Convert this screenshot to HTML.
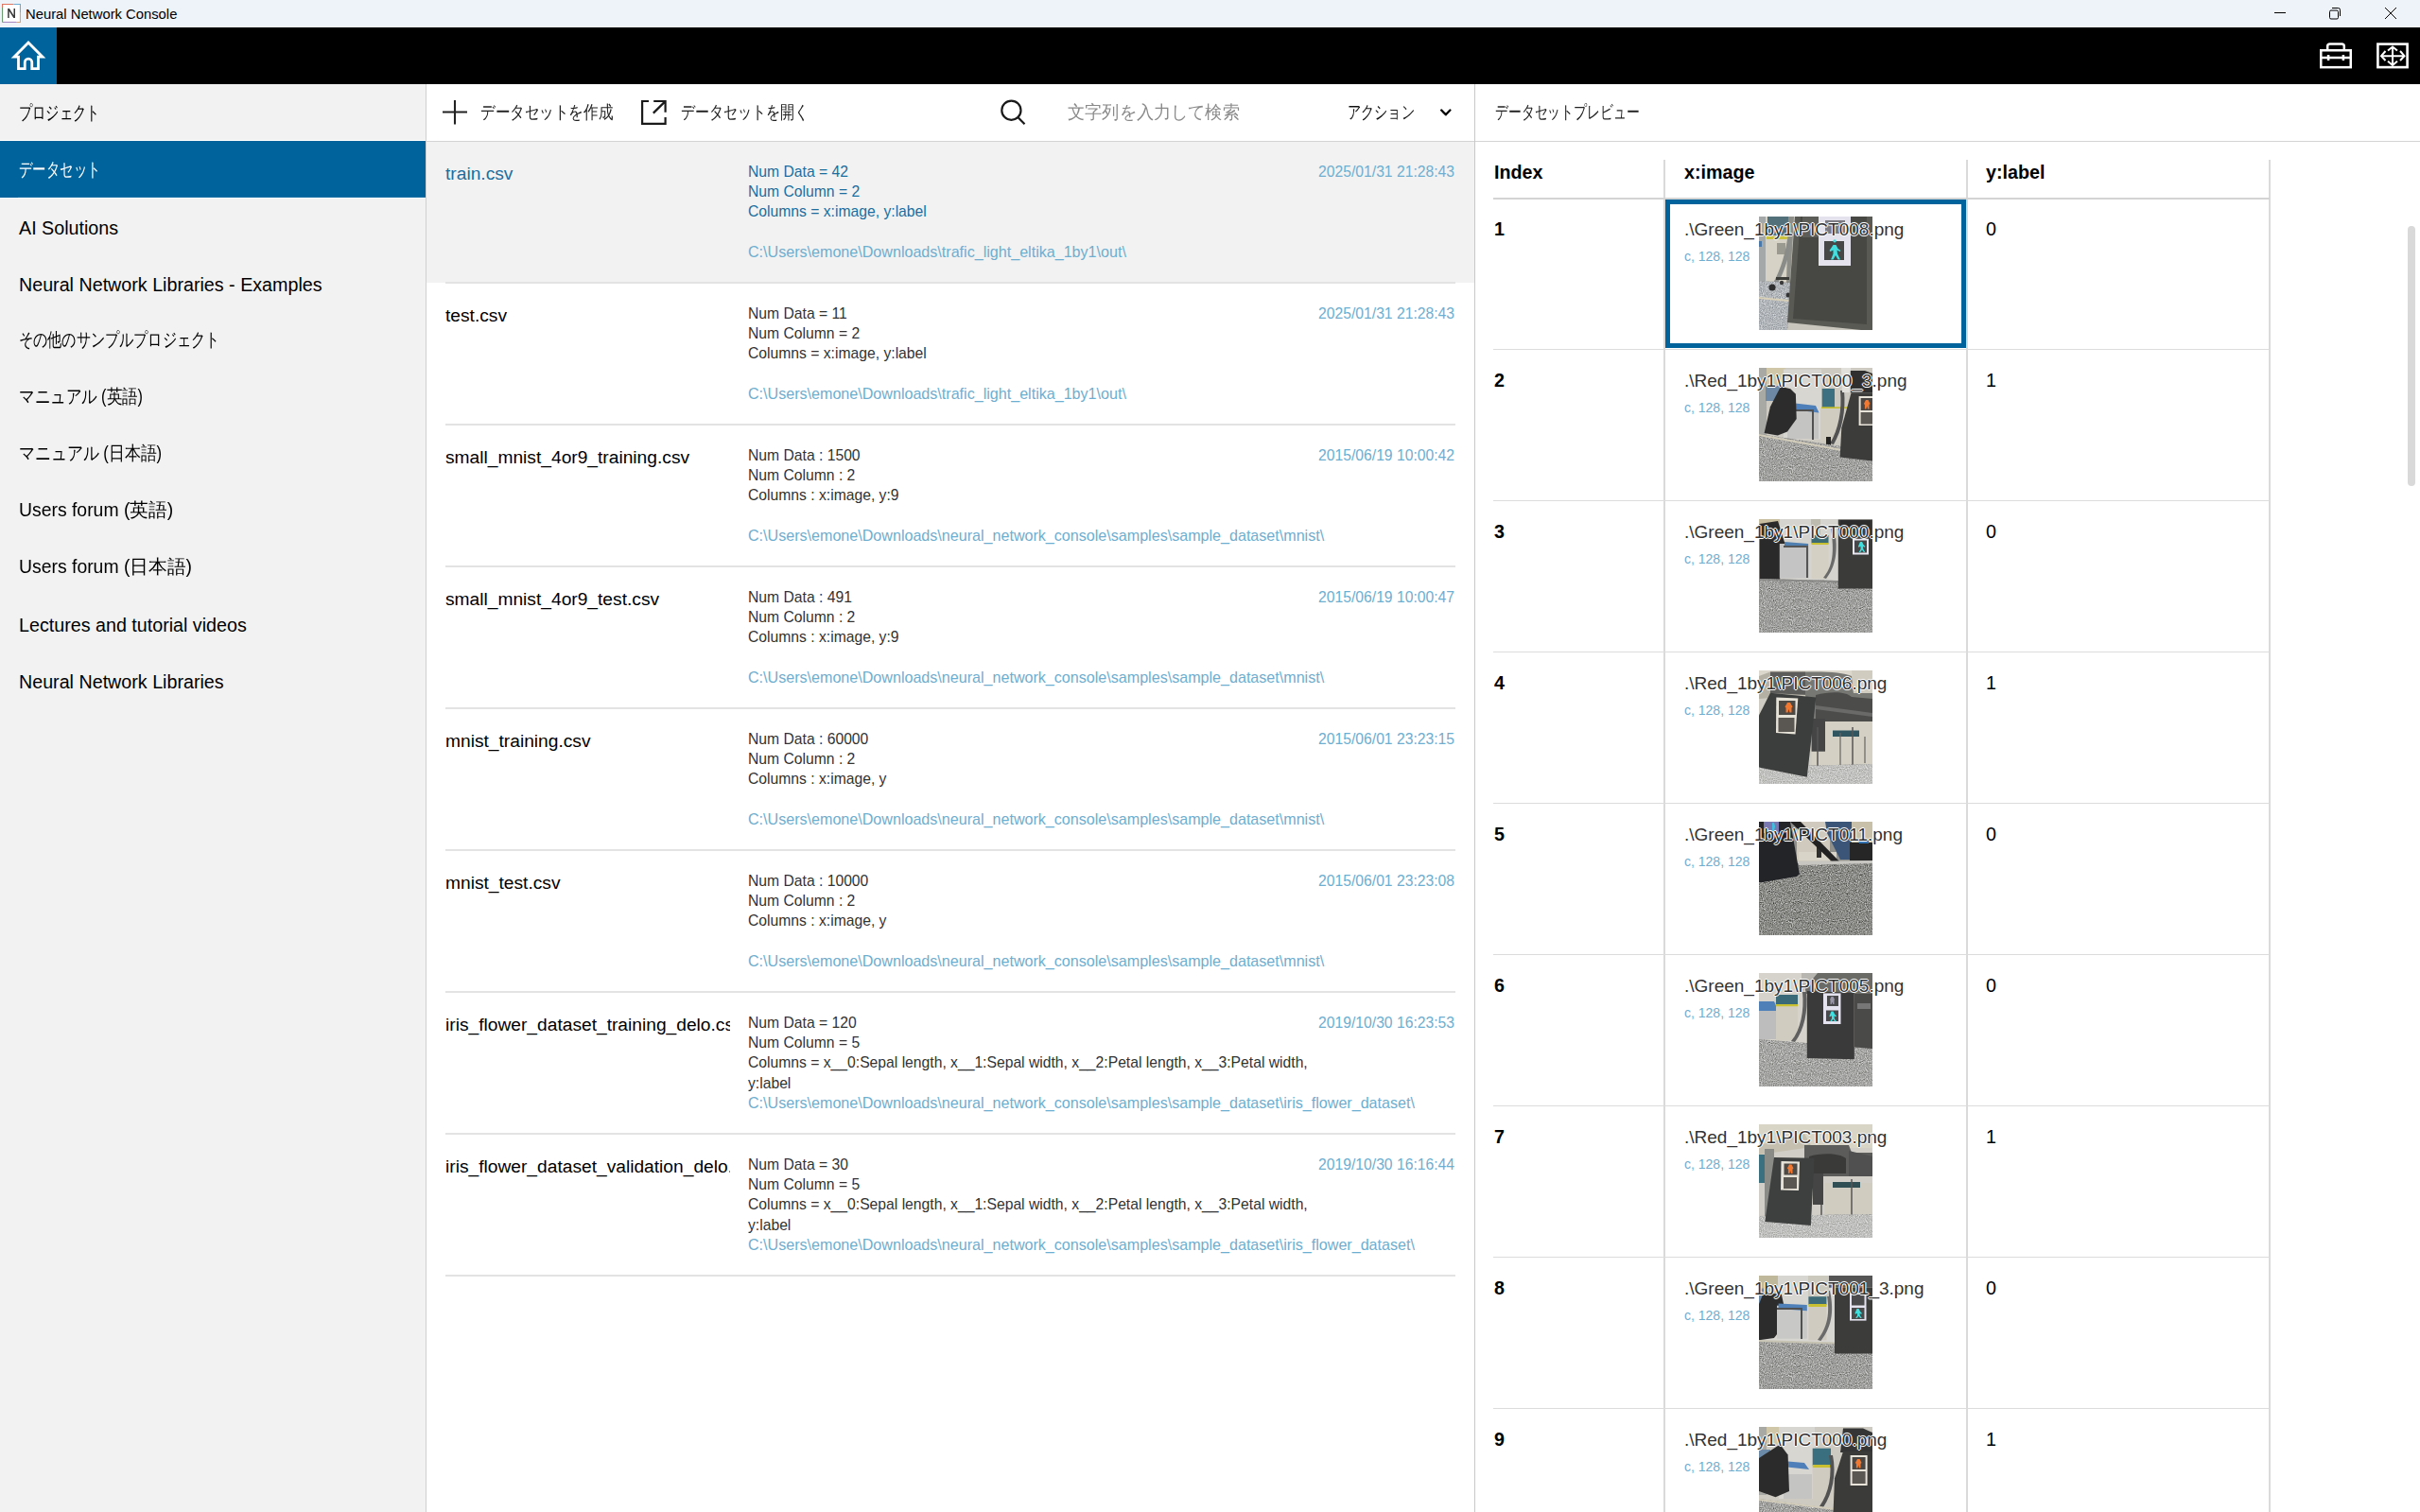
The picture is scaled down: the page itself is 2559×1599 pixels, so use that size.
<!DOCTYPE html><html><head><meta charset="utf-8"><style>
*{margin:0;padding:0;box-sizing:border-box}
html,body{width:2559px;height:1599px;overflow:hidden;background:#fff;font-family:"Liberation Sans",sans-serif;color:#000}
div,span,svg{position:absolute;white-space:nowrap}
.si{left:0;width:450px;height:60px}
.st{left:20px;top:17.5px;font-size:19.7px;line-height:24px;color:#000;transform-origin:0 50%}
.sel{background:#00639b}
.sel .st{color:#fff}
.vl{width:1px;background:#d0d0d0}
.hl{height:1px;background:#dcdcdc}
.fn{left:471px;width:301px;overflow:hidden;font-size:19.2px;line-height:24px;color:#000}
.inf{left:791px;font-size:15.7px;line-height:21.2px;color:#333}
.p{color:#6eaed0;font-size:16.1px;position:static}
.dt{right:1021px;font-size:15.7px;line-height:21.2px;color:#6eaed0}
.th{font-size:19.7px;font-weight:bold;line-height:24px}
.idx{left:1580px;font-size:19.7px;font-weight:bold;line-height:24px}
.fnm{left:1781px;font-size:19px;line-height:24px;color:#333;text-shadow:1px 0 0 #fff,-1px 0 0 #fff,0 1px 0 #fff,0 -1px 0 #fff,0 0 2px #fff}
.sz{left:1781px;font-size:14px;line-height:18px;color:#6eaed0}
.lb{left:2100px;font-size:19.7px;line-height:24px}
.img{left:1860px;width:120px;height:120px;overflow:hidden}
.jt{font-size:19px;line-height:28px;transform-origin:0 50%}
</style></head><body>
<svg width="0" height="0" style="left:0;top:0"><defs><filter id="fl" x="0" y="0" width="1" height="1" color-interpolation-filters="sRGB"><feTurbulence type="fractalNoise" baseFrequency="0.9" numOctaves="2" seed="4" result="t"/><feColorMatrix in="t" type="matrix" values="0.33 0.33 0.33 0 0 0.33 0.33 0.33 0 0 0.33 0.33 0.33 0 0 0 0 0 0 1" result="g"/><feComponentTransfer in="g" result="c"><feFuncR type="linear" slope="1.5" intercept="-0.25"/><feFuncG type="linear" slope="1.5" intercept="-0.25"/><feFuncB type="linear" slope="1.5" intercept="-0.25"/></feComponentTransfer><feBlend in="c" in2="SourceGraphic" mode="overlay" result="b"/><feComposite in="b" in2="SourceGraphic" operator="in"/></filter></defs></svg>
<div style="left:0;top:0;width:2559px;height:29px;background:#eef2f9"></div>
<svg style="left:2px;top:4px" width="20" height="20" viewBox="0 0 20 20">
<rect x="0" y="0" width="20" height="20" fill="#fff"/>
<path d="M0.5 4 V0.5 H12.5" stroke="#e2735c" stroke-width="1.2" fill="none"/>
<path d="M12.5 0.5 H19.5 V9" stroke="#6aaed6" stroke-width="1.2" fill="none"/>
<path d="M19.5 9 V19.5 H15" stroke="#d4a67e" stroke-width="1.2" fill="none"/>
<path d="M15 19.5 H0.5" stroke="#a88cc4" stroke-width="1.2" fill="none"/>
<path d="M0.5 19.5 V4" stroke="#6e9a70" stroke-width="1.2" fill="none"/>
<path d="M6.2 15 V5 H7.9 L12.5 12.2 V5 H14 V15 H12.3 L7.7 7.8 V15 Z" fill="#3a3a3a"/>
</svg>
<div style="left:27px;top:5px;font-size:14.8px;line-height:20px;color:#000">Neural Network Console</div>
<svg style="left:2400px;top:0" width="159" height="29" viewBox="2400 0 159 29">
<path d="M2405 13.5 H2417" stroke="#000" stroke-width="1"/>
<rect x="2463.5" y="11" width="9" height="9" rx="1.5" stroke="#000" stroke-width="1" fill="none"/>
<path d="M2466 8.5 H2472.5 A2 2 0 0 1 2474.5 10.5 V17" stroke="#000" stroke-width="1" fill="none"/>
<path d="M2522 8 L2534 20 M2534 8 L2522 20" stroke="#000" stroke-width="1"/>
</svg>
<div style="left:0;top:29px;width:2559px;height:60px;background:#000"></div>
<div style="left:0;top:29px;width:60px;height:60px;background:#00639b"></div>
<svg style="left:0;top:29px" width="60" height="60" viewBox="0 29 60 60">
<path d="M30 45 L15 60.2 H19.5 V72.6 H26.25 V65.8 A3.75 3.75 0 0 1 33.75 65.8 V72.6 H40.5 V60.2 H45 Z" stroke="#fff" stroke-width="2.8" fill="none" stroke-linejoin="miter" stroke-miterlimit="4"/>
</svg>
<svg style="left:2440px;top:36px" width="119" height="46" viewBox="2440 36 119 46">
<rect x="2454.25" y="53.25" width="31.5" height="17.9" stroke="#fff" stroke-width="2.5" fill="none"/>
<path d="M2461.2 53 V49 A2.5 2.5 0 0 1 2463.7 46.5 H2476.3 A2.5 2.5 0 0 1 2478.8 49 V53" stroke="#fff" stroke-width="2.5" fill="none"/>
<path d="M2455 61 H2485" stroke="#fff" stroke-width="2.5"/>
<path d="M2462.1 58 V64 M2477.9 58 V64" stroke="#fff" stroke-width="2.5"/>
<rect x="2514.4" y="46.6" width="31.2" height="24.5" stroke="#fff" stroke-width="2.6" fill="none"/>
<path d="M2518 59.2 H2542.5 M2530 49.5 V69" stroke="#fff" stroke-width="2"/>
<path d="M2522.5 54 L2518 59.2 L2522.5 64 M2538 54 L2542.5 59.2 L2538 64 M2525 53.5 L2530 49.5 L2535 53.5 M2525 64.8 L2530 69 L2535 64.8" stroke="#fff" stroke-width="2" fill="none"/>
</svg>
<div style="left:0;top:89px;width:450px;height:1510px;background:#f2f2f2"></div>
<div class="si" style="top:89px"><span class="st" id="s0">プロジェクト</span></div>
<div class="si sel" style="top:149px"><span class="st" id="s1">データセット</span></div>
<div class="si" style="top:209px"><span class="st" style="top:20px">AI Solutions</span></div>
<div class="si" style="top:269px"><span class="st" style="top:20px">Neural Network Libraries - Examples</span></div>
<div class="si" style="top:329px"><span class="st" id="s4">その他のサンプルプロジェクト</span></div>
<div class="si" style="top:389px"><span class="st" id="s5">マニュアル (英語)</span></div>
<div class="si" style="top:449px"><span class="st" id="s6">マニュアル (日本語)</span></div>
<div class="si" style="top:509px"><span class="st" id="s7">Users forum (英語)</span></div>
<div class="si" style="top:569px"><span class="st" id="s8">Users forum (日本語)</span></div>
<div class="si" style="top:629px"><span class="st" style="top:20px">Lectures and tutorial videos</span></div>
<div class="si" style="top:689px"><span class="st" style="top:20px">Neural Network Libraries</span></div>
<div style="left:0;top:148px;width:450px;height:1px;background:#fff"></div>
<div style="left:19px;top:208px;width:431px;height:1px;background:#1a73a6"></div>
<div style="left:0;top:209px;width:450px;height:1px;background:#fcfcfc"></div>
<div class="vl" style="left:450px;top:89px;height:1510px"></div>
<div class="vl" style="left:1559px;top:89px;height:1510px;background:#c8c8c8"></div>
<div class="hl" style="left:451px;top:149px;width:1108px;background:#d4d4d4"></div>
<div class="hl" style="left:1560px;top:149px;width:999px;background:#d4d4d4"></div>
<svg style="left:455px;top:95px" width="260" height="50" viewBox="455 95 260 50">
<path d="M468 118.5 H494 M481 106 V131.5" stroke="#222" stroke-width="2.1"/>
<path d="M686 107 H679.1 V130.9 H703.6 V124.1 M703.6 118.7 V107 H691.2 M703 107.6 L690.8 119.6" stroke="#1a1a1a" stroke-width="2.2" fill="none"/>
</svg>
<svg style="left:1050px;top:95px" width="50" height="45" viewBox="1050 95 50 45">
<circle cx="1069.4" cy="116.7" r="10.1" stroke="#1a1a1a" stroke-width="2.2" fill="none"/>
<path d="M1076.6 124.2 L1083.5 131.3" stroke="#1a1a1a" stroke-width="2.2"/>
</svg>
<svg style="left:1515px;top:108px" width="25" height="20" viewBox="1515 108 25 20">
<path d="M1524.2 116.5 L1528.8 121.3 L1533.4 116.5" stroke="#000" stroke-width="2.3" fill="none" stroke-linecap="round" stroke-linejoin="round"/>
</svg>
<span class="jt" id="tb0" style="left:508.2px;top:105px;color:#222">データセットを作成</span>
<span class="jt" id="tb1" style="left:720.0px;top:105px;color:#222">データセットを開く</span>
<span class="jt" id="tb2" style="left:1128.8px;top:105px;color:#8a8a8a">文字列を入力して検索</span>
<span class="jt" id="tb3" style="left:1424.8px;top:105px;color:#111">アクション</span>
<span class="jt" id="tb4" style="left:1580.5px;top:105px;color:#222">データセットプレビュー</span>
<div style="left:451px;top:150px;width:1108px;height:149px;background:#f2f2f2"></div>
<div class="hl" style="left:471px;top:298px;width:1068px;height:2px;background:#e3e3e3"></div>
<div class="fn" style="top:172px;color:#1a6ea0">train.csv</div>
<div class="inf" style="top:171px;color:#1a6ea0">Num Data = 42<br>Num Column = 2<br>Columns = x:image, y:label<br>&nbsp;<br><span class="p">C:\Users\emone\Downloads\trafic_light_eltika_1by1\out\</span></div>
<div class="dt" style="top:171px">2025/01/31 21:28:43</div>
<div class="hl" style="left:471px;top:448px;width:1068px;height:2px;background:#e3e3e3"></div>
<div class="fn" style="top:322px;color:#000">test.csv</div>
<div class="inf" style="top:321px;color:#333">Num Data = 11<br>Num Column = 2<br>Columns = x:image, y:label<br>&nbsp;<br><span class="p">C:\Users\emone\Downloads\trafic_light_eltika_1by1\out\</span></div>
<div class="dt" style="top:321px">2025/01/31 21:28:43</div>
<div class="hl" style="left:471px;top:598px;width:1068px;height:2px;background:#e3e3e3"></div>
<div class="fn" style="top:472px;color:#000">small_mnist_4or9_training.csv</div>
<div class="inf" style="top:471px;color:#333">Num Data : 1500<br>Num Column : 2<br>Columns : x:image, y:9<br>&nbsp;<br><span class="p">C:\Users\emone\Downloads\neural_network_console\samples\sample_dataset\mnist\</span></div>
<div class="dt" style="top:471px">2015/06/19 10:00:42</div>
<div class="hl" style="left:471px;top:748px;width:1068px;height:2px;background:#e3e3e3"></div>
<div class="fn" style="top:622px;color:#000">small_mnist_4or9_test.csv</div>
<div class="inf" style="top:621px;color:#333">Num Data : 491<br>Num Column : 2<br>Columns : x:image, y:9<br>&nbsp;<br><span class="p">C:\Users\emone\Downloads\neural_network_console\samples\sample_dataset\mnist\</span></div>
<div class="dt" style="top:621px">2015/06/19 10:00:47</div>
<div class="hl" style="left:471px;top:898px;width:1068px;height:2px;background:#e3e3e3"></div>
<div class="fn" style="top:772px;color:#000">mnist_training.csv</div>
<div class="inf" style="top:771px;color:#333">Num Data : 60000<br>Num Column : 2<br>Columns : x:image, y<br>&nbsp;<br><span class="p">C:\Users\emone\Downloads\neural_network_console\samples\sample_dataset\mnist\</span></div>
<div class="dt" style="top:771px">2015/06/01 23:23:15</div>
<div class="hl" style="left:471px;top:1048px;width:1068px;height:2px;background:#e3e3e3"></div>
<div class="fn" style="top:922px;color:#000">mnist_test.csv</div>
<div class="inf" style="top:921px;color:#333">Num Data : 10000<br>Num Column : 2<br>Columns : x:image, y<br>&nbsp;<br><span class="p">C:\Users\emone\Downloads\neural_network_console\samples\sample_dataset\mnist\</span></div>
<div class="dt" style="top:921px">2015/06/01 23:23:08</div>
<div class="hl" style="left:471px;top:1198px;width:1068px;height:2px;background:#e3e3e3"></div>
<div class="fn" style="top:1072px;color:#000">iris_flower_dataset_training_delo.csv</div>
<div class="inf" style="top:1071px;color:#333">Num Data = 120<br>Num Column = 5<br>Columns = x__0:Sepal length, x__1:Sepal width, x__2:Petal length, x__3:Petal width,<br>y:label<br><span class="p">C:\Users\emone\Downloads\neural_network_console\samples\sample_dataset\iris_flower_dataset\</span></div>
<div class="dt" style="top:1071px">2019/10/30 16:23:53</div>
<div class="hl" style="left:471px;top:1348px;width:1068px;height:2px;background:#e3e3e3"></div>
<div class="fn" style="top:1222px;color:#000">iris_flower_dataset_validation_delo.csv</div>
<div class="inf" style="top:1221px;color:#333">Num Data = 30<br>Num Column = 5<br>Columns = x__0:Sepal length, x__1:Sepal width, x__2:Petal length, x__3:Petal width,<br>y:label<br><span class="p">C:\Users\emone\Downloads\neural_network_console\samples\sample_dataset\iris_flower_dataset\</span></div>
<div class="dt" style="top:1221px">2019/10/30 16:16:44</div>
<div class="th" style="left:1580px;top:170px">Index</div>
<div class="th" style="left:1781px;top:170px">x:image</div>
<div class="th" style="left:2100px;top:170px">y:label</div>
<div class="vl" style="left:1759px;top:169px;width:2px;height:1430px;background:#dadada"></div>
<div class="vl" style="left:2079px;top:169px;width:2px;height:1430px;background:#dadada"></div>
<div class="vl" style="left:2399px;top:169px;width:2px;height:1430px;background:#dadada"></div>
<div class="hl" style="left:1579px;top:209px;width:821px;height:2px;background:#d4d4d4"></div>
<div class="hl" style="left:1579px;top:369px;width:821px"></div>
<div class="idx" style="top:230px">1</div>
<svg class="img" style="top:229px" width="120" height="120" viewBox="0 0 120 120"><rect width="120" height="120" fill="#c8c6bd"/>
<rect x="0" y="0" width="8" height="72" fill="#a4a8a8"/>
<rect x="0" y="26" width="3" height="6" fill="#4a78a8"/>
<rect x="7" y="0" width="28" height="70" fill="#d6d3c6"/>
<rect x="9" y="0" width="22" height="20" fill="#52707a"/>
<rect x="8" y="21" width="23" height="3" fill="#c9c23a"/>
<rect x="19" y="28" width="9" height="12" fill="#9a9a90"/>
<path d="M31 0 H37 L33 70 H29Z" fill="#8e8e88"/>
<path d="M30 24 C27 45 20 62 14 72 L18 74 C25 62 32 46 34 24Z" fill="#8a8c8a"/>
<path d="M0 68 L34 70 L30 120 L0 120Z" fill="#b2b6ba" filter="url(#fl)"/>
<path d="M0 85 L32 88 L32 90 L0 87Z" fill="#d8d0b8"/>
<path d="M18 64 H32 V67 H18Z" fill="#3a3a36"/>
<circle cx="14" cy="75" r="3.6" fill="#2f2f2f"/>
<circle cx="24" cy="70" r="2.2" fill="#3a3a3a"/>
<circle cx="31" cy="83" r="2.5" fill="#333"/>
<path d="M38 0 H120 V120 L108 120 L30 112Z" fill="#5a5a55"/>
<path d="M44 0 H114 V114 L36 108Z" fill="#474744"/>
<rect x="46" y="0" width="20" height="22" fill="#5c5c58"/>
<rect x="63" y="0" width="34" height="52" fill="#e4e2ec"/>
<rect x="70" y="4" width="21" height="14" fill="#7a7880"/>
<rect x="69" y="26" width="21" height="20" fill="#474747"/>
<path d="M80 27.5 a1.6 1.6 0 1 1 0.1 0 M78.5 30 l3 0 l2 4 l3 2 l-1 1 l-3 -1.5 l0.5 4 l3 6 h-2.5 l-2.5 -4.5 l-2.5 4.5 h-2.5 l2.5 -6 l0 -4 l-3 1.5 l-1 -1 z" fill="#40e0e0"/></svg>
<div class="fnm" style="top:231px">.\Green_1by1\PICT008.png</div>
<div class="sz" style="top:262px">c, 128, 128</div>
<div class="lb" style="top:230px">0</div>
<div class="hl" style="left:1579px;top:529px;width:821px"></div>
<div class="idx" style="top:390px">2</div>
<svg class="img" style="top:389px" width="120" height="120" viewBox="0 0 120 120"><rect width="120" height="120" fill="#cdcac2"/>
<rect x="0" y="0" width="8" height="72" fill="#a8a8a4"/>
<rect x="8" y="0" width="20" height="19" fill="#cfc7a8"/>
<rect x="7" y="19" width="15" height="16" fill="#6c88a4"/>
<rect x="26" y="1.6" width="40" height="74" fill="#d8d6d0"/>
<rect x="30" y="45" width="33" height="30" fill="#c4c4c2"/>
<path d="M34 37 L60 40 L63.5 47.6 L34 44Z" fill="#4f7fb8"/>
<path d="M33 44 L58 44 L58 76 L56 76 L56 46 L33 46Z" fill="#505050"/>
<path d="M23 19.8 L33.3 22.2 L38.9 27.8 L39.7 54 L30 67.5 L19.8 71.4 L5.6 69 L11.9 41.3Z" fill="#2c2c2c"/>
<rect x="66.7" y="22" width="13.3" height="20" fill="#3d7080"/>
<rect x="66" y="41.3" width="29" height="1.7" fill="#c8c030"/>
<rect x="65" y="43" width="19" height="35" fill="#d0ccc0"/>
<path d="M86 24 C88 45 84 65 75 80 L79 81 C88 66 92 45 90 24Z" fill="#525252"/>
<rect x="71" y="73" width="5" height="10" fill="#222"/>
<path d="M0 70 L120 88 L120 120 L0 120Z" fill="#a2a2a0" filter="url(#fl)"/>
<path d="M0 70 L86 85.7 L86 87.7 L0 72Z" fill="#d2ccba"/>
<path d="M87 0 H97 L96.8 26 H88Z" fill="#e2e0da"/>
<path d="M96.8 3 L112 3 L120 6 V26.2 H96.8Z" fill="#2f2f2f"/>
<path d="M97.6 26.2 L120 26.2 L120 98.4 L85.7 94.4 L87.3 63.5Z" fill="#3c3c3b"/>
<rect x="105.6" y="30" width="14.4" height="31" fill="#e8e4da"/>
<rect x="107.6" y="32" width="12.4" height="13" fill="#4a4644"/>
<rect x="107.6" y="47" width="12.4" height="12.5" fill="#5a5652"/>
<path d="M113 34 h2.5 l2 4 l-1 1 l0 4.5 h-1.5 l-0.8 -3 l-0.8 3 h-1.5 l0 -4.5 l-1 -1z" fill="#f07830"/></svg>
<div class="fnm" style="top:391px">.\Red_1by1\PICT000_3.png</div>
<div class="sz" style="top:422px">c, 128, 128</div>
<div class="lb" style="top:390px">1</div>
<div class="hl" style="left:1579px;top:689px;width:821px"></div>
<div class="idx" style="top:550px">3</div>
<svg class="img" style="top:549px" width="120" height="120" viewBox="0 0 120 120"><rect width="120" height="120" fill="#d6d4ce"/>
<rect x="0" y="0" width="22" height="10" fill="#c8bfa0"/>
<path d="M0.5 5 L20 2 L30 34 L21.8 64.4 L0.5 64.4 Z" fill="#2a2a2a"/>
<rect x="21.8" y="26" width="31" height="36.5" fill="#c4c4c4"/>
<path d="M27 24 L52 26 L52 30 L27 28Z" fill="#4f7fb0"/>
<path d="M26 28 H52 V62 H50 V30 H26Z" fill="#555"/>
<rect x="55" y="0" width="10" height="18" fill="#bdbab0"/>
<rect x="55.5" y="17" width="18" height="8.5" fill="#3d6b74"/>
<rect x="55.5" y="25" width="18" height="2" fill="#c8c030"/>
<rect x="55.5" y="27" width="18" height="36" fill="#d4d0c4"/>
<path d="M76 10 C80 35 78 50 68 62 L71 63 C81 50 84 35 80 10Z" fill="#6a6a6a"/>
<path d="M0 63 L120 66 L120 120 L0 120Z" fill="#a0a09e" filter="url(#fl)"/>
<path d="M0 63 L84 65 L84 67 L0 65Z" fill="#8a8a88"/>
<path d="M83.8 0.5 H120 V73.6 H83.8 Z" fill="#3b3b3a"/>
<rect x="86" y="1" width="32" height="10" fill="#2c2c2c"/>
<rect x="99" y="20.8" width="17" height="16.7" fill="#e8e6f0"/>
<rect x="101" y="22.5" width="13" height="13" fill="#474747"/>
<path d="M107 24 h2 l1.5 3 l2 2 l-1 0.8 l-1.5 -1 l0.3 3 l2 3.2 h-1.5 l-1.8 -2.5 l-1.8 2.5 h-1.5 l1.8 -3.2 l0 -3 l-2 1 l-0.6 -0.8z" fill="#40e0e0"/></svg>
<div class="fnm" style="top:551px">.\Green_1by1\PICT000.png</div>
<div class="sz" style="top:582px">c, 128, 128</div>
<div class="lb" style="top:550px">0</div>
<div class="hl" style="left:1579px;top:849px;width:821px"></div>
<div class="idx" style="top:710px">4</div>
<svg class="img" style="top:709px" width="120" height="120" viewBox="0 0 120 120"><rect width="120" height="120" fill="#cfccc3"/>
<path d="M0 0 H120 V6 H0Z" fill="#dcd8ce"/>
<path d="M0 6 L12 1.6 L49 1.6 L49 26 L0 30Z" fill="#b4b0a4"/>
<path d="M12 1.6 L49 1.6 L52 26 L12 24Z" fill="#5c5c5a"/>
<path d="M49 1.6 C70 1 90 2 98 6 L100 24 L120 24 L120 55 L55 55 L49 26Z" fill="#777774"/>
<path d="M98 0 H120 V24 H100Z" fill="#d0ccc0"/>
<path d="M60 26 C75 22 92 22 98 28 L120 30 L120 55 L60 55Z" fill="#4c4c4a"/>
<path d="M60 37 L120 45 L120 49 L60 41Z" fill="#6a6a68"/>
<rect x="55.6" y="54" width="64.4" height="46" fill="#d4d0c4"/>
<rect x="55.6" y="51" width="14.4" height="34.7" fill="#454545"/>
<rect x="78" y="63.5" width="28" height="6.5" fill="#2f5560"/>
<path d="M62 60 V104 L99 108 V60" stroke="#555" stroke-width="1.5" fill="none"/>
<path d="M86 66 V100 M112 70 V98" stroke="#666" stroke-width="1.2"/>
<path d="M0 102 L120 99 L120 120 L0 120Z" fill="#c2c2c0" filter="url(#fl)"/>
<path d="M12 23.8 L60.3 28.6 L50.8 112.7 L0 102.4 L0 47.6Z" fill="#3c3e3d"/>
<path d="M18.3 28.6 L41.3 29.6 L38.5 67.5 L18 66Z" fill="#e6e2d8"/>
<rect x="21" y="32" width="17.5" height="15" fill="#4d4945"/>
<rect x="20.5" y="50" width="17" height="15" fill="#5a5652"/>
<path d="M30 34 h3 l2.5 4.5 l-1 1 l0 5 h-2 l-1 -3.5 l-1 3.5 h-2 l0 -5 l-1 -1z" fill="#f07830"/></svg>
<div class="fnm" style="top:711px">.\Red_1by1\PICT006.png</div>
<div class="sz" style="top:742px">c, 128, 128</div>
<div class="lb" style="top:710px">1</div>
<div class="hl" style="left:1579px;top:1009px;width:821px"></div>
<div class="idx" style="top:870px">5</div>
<svg class="img" style="top:869px" width="120" height="120" viewBox="0 0 120 120"><rect width="120" height="120" fill="#8f8f8c"/>
<rect x="40" y="0" width="35" height="44" fill="#cfcabd"/>
<rect x="42" y="32" width="40" height="9" fill="#d8d4c8"/>
<rect x="61" y="24" width="5" height="14" fill="#2f2f2f"/>
<path d="M0 0 L33 0 L43 55.6 L40 58 L3 64.3 L0 64Z" fill="#222428"/>
<rect x="5" y="0" width="16" height="12" fill="#7a78b0"/>
<path d="M14 1 h2 l1 4 l-1 5 h-2z" fill="#40c0e0"/>
<path d="M33 0 L44 0 L85 42 L80 45Z" fill="#222"/>
<path d="M70 0 H98 V40 H86 L72 12Z" fill="#3b5578"/>
<path d="M98 0 H120 V22 H98Z" fill="#c8c0a8"/>
<path d="M96 22 H120 V41 H96Z" fill="#262626"/>
<rect x="106" y="19" width="10" height="4" fill="#3070b0"/>
<path d="M0 64.3 L3 64.3 L40 58 L43 55.6 L42 44 L120 42 L120 120 L0 120Z" fill="#8c8c89" filter="url(#fl)"/>
<path d="M42 42 L120 41 L120 44 L42 46Z" fill="#c8c6c0"/></svg>
<div class="fnm" style="top:871px">.\Green_1by1\PICT011.png</div>
<div class="sz" style="top:902px">c, 128, 128</div>
<div class="lb" style="top:870px">0</div>
<div class="hl" style="left:1579px;top:1169px;width:821px"></div>
<div class="idx" style="top:1030px">6</div>
<svg class="img" style="top:1029px" width="120" height="120" viewBox="0 0 120 120"><rect width="120" height="120" fill="#d5d3cb"/>
<path d="M45 0 H120 V22 H50Z" fill="#6a6a66"/>
<path d="M45 0 L62 0 L52 12 L45 22Z" fill="#b8b6b0"/>
<rect x="0" y="31" width="18" height="39" fill="#bdbdbd"/>
<path d="M0 30 H16 L20 40 H0Z" fill="#4f80b8"/>
<rect x="18" y="23" width="23" height="11" fill="#3a6a78"/>
<rect x="18" y="33" width="23" height="2.5" fill="#c8c030"/>
<rect x="18" y="35.5" width="23" height="36" fill="#d0ccc0"/>
<path d="M46 20 C48 40 44 60 34 72 L38 73 C48 60 52 40 50 20Z" fill="#606060"/>
<rect x="101" y="22" width="19" height="58" fill="#4a4a48"/>
<rect x="104" y="32" width="14" height="6" fill="#777"/>
<path d="M0 70 L50 74 L120 80 L120 120 L0 120Z" fill="#a6a6a4" filter="url(#fl)"/>
<path d="M50.8 19 L100.8 21 L100.8 91.3 L50.8 90Z" fill="#3a3a3a"/>
<rect x="68" y="21.4" width="18.5" height="32.6" fill="#e4e2ee"/>
<rect x="72" y="24" width="12" height="11" fill="#4a4a4c"/>
<rect x="71" y="39.5" width="13" height="11.5" fill="#4a4a4c"/>
<path d="M76.5 25 h2 l1.5 3 l-0.5 1 l0 4 h-1.2 l-0.8 -2.5 l-0.8 2.5 h-1.2 l0 -4 l-0.5 -1z" fill="#9a98a8"/>
<path d="M76.5 40.5 h2 l1.5 3 l2 2 l-1 0.8 l-1.5 -1 l0.3 3 l2 3 h-1.5 l-1.8 -2.5 l-1.8 2.5 h-1.5 l1.8 -3 l0 -3 l-2 1 l-0.6 -0.8z" fill="#40e0e0"/></svg>
<div class="fnm" style="top:1031px">.\Green_1by1\PICT005.png</div>
<div class="sz" style="top:1062px">c, 128, 128</div>
<div class="lb" style="top:1030px">0</div>
<div class="hl" style="left:1579px;top:1329px;width:821px"></div>
<div class="idx" style="top:1190px">7</div>
<svg class="img" style="top:1189px" width="120" height="120" viewBox="0 0 120 120"><rect width="120" height="120" fill="#d0cec6"/>
<path d="M0 0 H120 V25 H0Z" fill="#d8d4c6"/>
<path d="M0 22 L48 10 L56 24 L0 32Z" fill="#c4bfae"/>
<path d="M48 22 L95 22 L98 30 L120 30 L120 55 L48 55Z" fill="#5c5c5a"/>
<path d="M53 34 C65 30 85 30 92 36 L92 52 L53 52Z" fill="#3a3a38"/>
<path d="M95 28 L120 34 L120 55 L95 55Z" fill="#505050"/>
<rect x="0" y="32" width="6" height="30" fill="#3a7080"/>
<path d="M6 26 H16 V100 H6Z" fill="#8a8a86"/>
<rect x="70" y="62" width="50" height="33" fill="#d0ccbf"/>
<rect x="78" y="61" width="29" height="6" fill="#2f4f55"/>
<path d="M66 58 V100 L98 104 V58" stroke="#555" stroke-width="1.5" fill="none"/>
<rect x="57" y="52" width="11" height="33" fill="#454545"/>
<path d="M0 97 L120 95 L120 120 L0 120Z" fill="#c0c0be" filter="url(#fl)"/>
<path d="M16 35 L58.7 35.7 L54.8 107 L6.3 103Z" fill="#3e403f"/>
<path d="M23.5 39 L43 39.5 L42 70 L23 69.5Z" fill="#e6e2d8"/>
<rect x="26.5" y="41.5" width="14" height="12" fill="#4d4945"/>
<rect x="26" y="56" width="14" height="12" fill="#5a5652"/>
<path d="M32 42.5 h2.5 l2 4 l-1 1 l0 4.5 h-1.5 l-0.8 -3 l-0.8 3 h-1.5 l0 -4.5 l-1 -1z" fill="#f07830"/></svg>
<div class="fnm" style="top:1191px">.\Red_1by1\PICT003.png</div>
<div class="sz" style="top:1222px">c, 128, 128</div>
<div class="lb" style="top:1190px">1</div>
<div class="hl" style="left:1579px;top:1489px;width:821px"></div>
<div class="idx" style="top:1350px">8</div>
<svg class="img" style="top:1349px" width="120" height="120" viewBox="0 0 120 120"><rect width="120" height="120" fill="#d8d6d0"/>
<rect x="0" y="0" width="20" height="24" fill="#c0b89a"/>
<rect x="0" y="13.5" width="5" height="16.5" fill="#6a88a8"/>
<path d="M4.8 18.3 L23.8 19.8 L27.8 38 L23 57 L15.9 65.9 L0 68.3 L0 30Z" fill="#2c2c2c"/>
<rect x="19" y="31.7" width="31.8" height="35" fill="#c8c8c6"/>
<path d="M20.6 29.4 L50.8 31 L50.8 37.3 L20.6 35Z" fill="#4f80b8"/>
<path d="M19 34 H46 V67 H44 V36 H19Z" fill="#505050"/>
<rect x="52.4" y="22.2" width="19" height="8.5" fill="#3d6b78"/>
<rect x="52.4" y="30" width="19" height="3" fill="#c8c030"/>
<rect x="52.4" y="33" width="19" height="35.3" fill="#cfcbc0"/>
<path d="M71 16 C76 40 72 55 62 68 L65.5 69 C76 55 80 40 75 16Z" fill="#6a6a6a"/>
<rect x="52" y="0" width="22" height="22" fill="#cbc8be"/>
<path d="M0 69 L120 72 L120 120 L0 120Z" fill="#a0a09e" filter="url(#fl)"/>
<path d="M0 68 L80 70.5 L80 72.5 L0 70Z" fill="#c8c4b4"/>
<rect x="74" y="0" width="46" height="12.7" fill="#555"/>
<path d="M80 12.7 H120 V82.5 H80Z" fill="#3c3c3b"/>
<rect x="96" y="18.3" width="17.5" height="29.3" fill="#e4e2ee"/>
<rect x="98" y="20" width="13.5" height="11.5" fill="#4a4a4c"/>
<rect x="98" y="34" width="13.5" height="12" fill="#4a4a4c"/>
<path d="M103.5 35 h2 l1.5 3 l2 2 l-1 0.8 l-1.5 -1 l0.3 2.5 l2 2.7 h-1.5 l-1.8 -2.2 l-1.8 2.2 h-1.5 l1.8 -2.7 l0 -2.5 l-2 1 l-0.6 -0.8z" fill="#40e0e0"/></svg>
<div class="fnm" style="top:1351px">.\Green_1by1\PICT001_3.png</div>
<div class="sz" style="top:1382px">c, 128, 128</div>
<div class="lb" style="top:1350px">0</div>
<div class="hl" style="left:1579px;top:1649px;width:821px"></div>
<div class="idx" style="top:1510px">9</div>
<svg class="img" style="top:1509px" width="120" height="120" viewBox="0 0 120 120"><rect width="120" height="120" fill="#cdcac2"/>
<rect x="0" y="0" width="8" height="72" fill="#a8a8a4"/>
<rect x="8" y="0" width="20" height="19" fill="#cfc7a8"/>
<rect x="0" y="24" width="12" height="14" fill="#6b8aa8"/>
<rect x="21" y="0" width="38" height="76" fill="#d8d6d0"/>
<rect x="26" y="50" width="30" height="26" fill="#c4c4c2"/>
<path d="M25 36 L48 38 L53 45 L25 42Z" fill="#4f7fb8"/>
<path d="M22.3 18.6 L30.6 29.6 L32 68 L17.5 74.3 L0 68 L0 33Z" fill="#2b2b2b"/>
<rect x="56.7" y="22.7" width="19.3" height="18" fill="#3a6f80"/>
<rect x="56.7" y="40" width="19.3" height="3" fill="#c8c030"/>
<rect x="56.7" y="43" width="22" height="35" fill="#cfcbc0"/>
<path d="M74 30 C78 50 74 70 64 84 L68 85 C78 70 82 50 78 30Z" fill="#525252"/>
<path d="M0 76 L120 92 L120 120 L0 120Z" fill="#a2a2a0" filter="url(#fl)"/>
<path d="M0 76 L80 86 L80 88 L0 78Z" fill="#d2ccba"/>
<path d="M89 1.4 H110 L120 6 V27 H86Z" fill="#353535"/>
<path d="M89 26 L120 26 L120 120 L77.4 120 L80 54.3Z" fill="#3b3b3a"/>
<rect x="96.6" y="30" width="18" height="32" fill="#e8e4da"/>
<rect x="98.6" y="32" width="14" height="13" fill="#4a4644"/>
<rect x="98.6" y="47" width="14" height="13" fill="#5a5652"/>
<path d="M104 34 h2.5 l2 4 l-1 1 l0 4.5 h-1.5 l-0.8 -3 l-0.8 3 h-1.5 l0 -4.5 l-1 -1z" fill="#f07830"/></svg>
<div class="fnm" style="top:1511px">.\Red_1by1\PICT000.png</div>
<div class="sz" style="top:1542px">c, 128, 128</div>
<div class="lb" style="top:1510px">1</div>
<div style="left:1761px;top:211px;width:318px;height:157px;border:5px solid #00639b"></div>
<div style="left:2546px;top:239px;width:8px;height:275px;border-radius:4px;background:#d9d9d9"></div>
<style>#s0{transform:scaleX(0.7100)}#s1{transform:scaleX(0.7200)}#s4{transform:scaleX(0.7579)}#s5{transform:scaleX(0.8260)}#s6{transform:scaleX(0.8461)}#s7{transform:scaleX(0.9843)}#s8{transform:scaleX(0.9844)}#tb0{transform:scaleX(0.8199)}#tb1{transform:scaleX(0.7924)}#tb2{transform:scaleX(0.9563)}#tb3{transform:scaleX(0.7453)}#tb4{transform:scaleX(0.7297)}</style>
<script>(function(){var T={"s0": 85.2, "s1": 86.4, "s4": 212.2, "s5": 131, "s6": 151.1, "s7": 163.2, "s8": 182.9, "tb0": 140.2, "tb1": 135.5, "tb2": 181.7, "tb3": 70.8, "tb4": 152.5};for(var k in T){var e=document.getElementById(k);if(!e)continue;e.style.transform="none";var w=e.getBoundingClientRect().width;if(w>0)e.style.transform="scaleX("+(T[k]/w)+")";}})();</script>
</body></html>
